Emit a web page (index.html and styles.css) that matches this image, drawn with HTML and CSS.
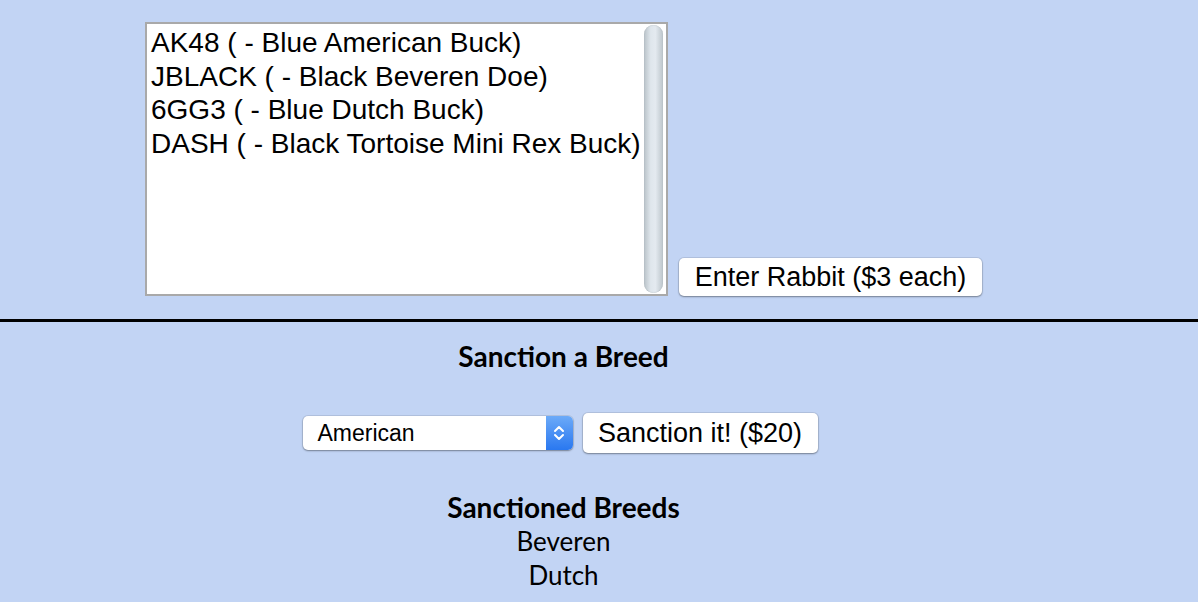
FILE: index.html
```html
<!DOCTYPE html>
<html lang="en">
<head>
    <meta charset="UTF-8">
    <title>Rabbit Show</title>
    <link rel="stylesheet" href="styles.css">
</head>
<body>
    <div class="wrap">
        <div class="enter-row">
            <div class="listbox">
                <div class="list-items">
                    <div class="list-item">AK48 ( - Blue American Buck)</div>
                    <div class="list-item">JBLACK ( - Black Beveren Doe)</div>
                    <div class="list-item">6GG3 ( - Blue Dutch Buck)</div>
                    <div class="list-item">DASH ( - Black Tortoise Mini Rex Buck)</div>
                </div>
                <div class="scroll-track"><div class="scroll-thumb"></div></div>
            </div>
            <button class="btn" type="button">Enter Rabbit ($3 each)</button>
        </div>
    </div>

    <hr class="divider">

    <div class="wrap">
        <h3 class="section-title">Sanction a Breed</h3>
        <div class="sanction-row">
            <div class="dropdown">
                <span class="dropdown-value">American</span>
                <span class="dropdown-arrow">
                    <svg width="14" height="22" viewBox="0 0 14 22">
                        <path d="M3 9 L7 5 L11 9" fill="none" stroke="#fff" stroke-width="2" stroke-linecap="round" stroke-linejoin="round"/>
                        <path d="M3 13 L7 17 L11 13" fill="none" stroke="#fff" stroke-width="2" stroke-linecap="round" stroke-linejoin="round"/>
                    </svg>
                </span>
            </div>
            <button class="btn" type="button">Sanction it! ($20)</button>
        </div>

        <h3 class="section-title list-title">Sanctioned Breeds</h3>
        <div class="breeds">
            <div class="breed">Beveren</div>
            <div class="breed">Dutch</div>
        </div>
    </div>
</body>
</html>
```

FILE: styles.css
```css
body {
    margin: 0;
    background-color: #c2d4f4;
    font-family: "Liberation Sans", Arial, sans-serif;
    color: #000;
}

.wrap {
    width: 1127px;
    text-align: center;
}

.enter-row {
    display: flex;
    justify-content: center;
    align-items: flex-end;
    gap: 11px;
    padding-top: 22px;
}

.listbox {
    display: flex;
    width: 519px;
    height: 270px;
    border: 2px solid #a9a9a9;
    background: white;
    text-align: left;
}

.list-items {
    flex: 1;
    padding: 2px 0 0 4px;
}

.list-item {
    font-size: 28px;
    line-height: 33.7px;
    white-space: nowrap;
}

.scroll-track {
    width: 24px;
    padding: 1px 3px 1px 0;
    box-sizing: border-box;
    display: flex;
    justify-content: flex-end;
}

.scroll-thumb {
    width: 19px;
    border-radius: 10px;
    background: linear-gradient(to right, #b9c2c8, #dfe6ec 35%, #e4eaf0 60%, #bcc5cb);
    box-shadow: inset 0 0 1px #9aa4aa;
}

.btn {
    font-family: "Liberation Sans", Arial, sans-serif;
    font-size: 27px;
    color: #000;
    background: white;
    border: none;
    border-radius: 5px;
    padding: 0 14px;
    width: 303px;
    height: 38px;
    box-shadow: 0 1px 2px rgba(0, 0, 0, 0.35), 0 0 0 1px rgba(0, 0, 0, 0.08);
}

.divider {
    margin: 23px 0 0 0;
    border: none;
    height: 3px;
    background: #000;
}

.section-title {
    font-family: Lato, "Open Sans", sans-serif;
    font-weight: bold;
    font-size: 28px;
    line-height: 30px;
    margin: 19px 0 0 0;
}

.sanction-row {
    display: flex;
    justify-content: center;
    align-items: center;
    gap: 10px;
    margin-top: 42px;
    padding-right: 7px;
}

.dropdown {
    display: flex;
    width: 270px;
    height: 34px;
    background: white;
    border-radius: 5px;
    box-shadow: 0 1px 2px rgba(0, 0, 0, 0.35), 0 0 0 1px rgba(0, 0, 0, 0.08);
    text-align: left;
}

.dropdown-value {
    flex: 1;
    font-size: 23px;
    line-height: 34px;
    padding-left: 15px;
}

.dropdown-arrow {
    width: 27px;
    border-radius: 0 5px 5px 0;
    background: linear-gradient(to bottom, #6caaf8, #2a78f0);
    display: flex;
    align-items: center;
    justify-content: center;
}

.sanction-row .btn {
    width: 235px;
    height: 40px;
}

.list-title {
    margin-top: 39px;
}

.breeds {
    margin-top: 2px;
}

.breed {
    font-family: Lato, "Open Sans", sans-serif;
    font-size: 26px;
    line-height: 34px;
}
```
